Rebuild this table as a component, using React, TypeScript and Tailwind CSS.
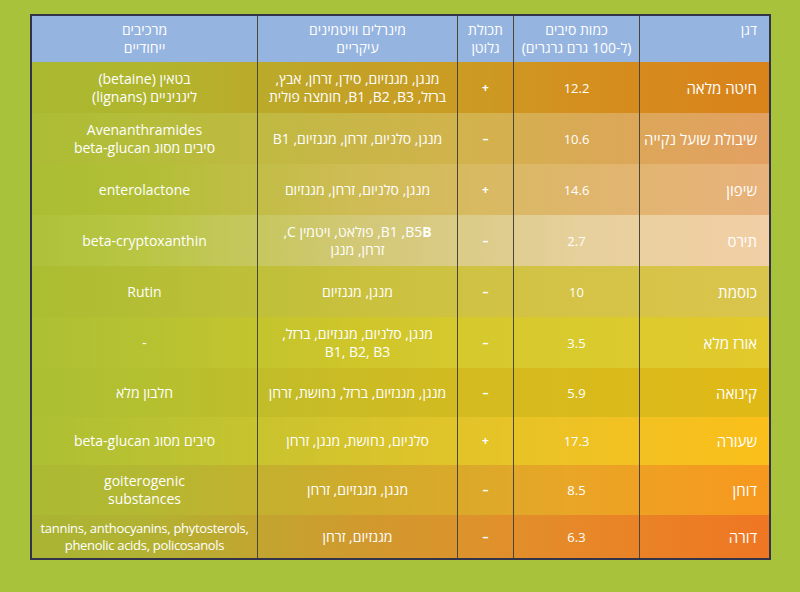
import React from "react";

type Row = {
  name: string;
  fiber: string;
  gluten: string;
  minerals: React.ReactNode;
  unique: React.ReactNode;
  h: string;
  bg: string;
};

const rows: Row[] = [
  {
    name: "חיטה מלאה",
    fiber: "12.2",
    gluten: "+",
    minerals: (
      <>
        מנגן, מגנזיום, סידן, זרחן, אבץ,
        <br />
        ברזל, <bdi>B3</bdi>, <bdi>B2</bdi>, <bdi>B1</bdi>, חומצה פולית
      </>
    ),
    unique: (
      <>
        בטאין (betaine)
        <br />
        ליגניניים (lignans)
      </>
    ),
    h: "h-[51px]",
    bg: "bg-[linear-gradient(to_left,#d9821b_0%,#d4901e_26%,#cc9a22_39%,#c4a126_56%,#b0b62e_85%,#a9b930_100%)]",
  },
  {
    name: "שיבולת שועל נקייה",
    fiber: "10.6",
    gluten: "–",
    minerals: <>מנגן, סלניום, זרחן, מגנזיום, B1</>,
    unique: (
      <>
        Avenanthramides
        <br />
        סיבים מסוג beta-glucan
      </>
    ),
    h: "h-[51px]",
    bg: "bg-[linear-gradient(to_left,#e3a062_0%,#d9aa55_26%,#d3b24d_39%,#c9b648_56%,#b5bd3a_85%,#acbc34_100%)]",
  },
  {
    name: "שיפון",
    fiber: "14.6",
    gluten: "+",
    minerals: <>מנגן, סלניום, זרחן, מגנזיום</>,
    unique: <>enterolactone</>,
    h: "h-[51px]",
    bg: "bg-[linear-gradient(to_left,#e8b27c_0%,#dfb66c_26%,#d8ba62_39%,#cfbc55_56%,#b2bf36_85%,#abbe33_100%)]",
  },
  {
    name: "תירס",
    fiber: "2.7",
    gluten: "–",
    minerals: (
      <>
        <bdi>
          B5<span className="font-bold">B</span>
        </bdi>
        , <bdi>B1</bdi>, פולאט, ויטמין C,
        <br />
        זרחן, מנגן
      </>
    ),
    unique: <>beta-cryptoxanthin</>,
    h: "h-[51px]",
    bg: "bg-[linear-gradient(to_left,#f2cfa6_0%,#e6d09c_26%,#dccc8a_39%,#d2c876_56%,#b9c644_85%,#aec13a_100%)]",
  },
  {
    name: "כוסמת",
    fiber: "10",
    gluten: "–",
    minerals: <>מנגן, מגנזיום</>,
    unique: <>Rutin</>,
    h: "h-[51px]",
    bg: "bg-[linear-gradient(to_left,#dac54c_0%,#d4c346_26%,#d0c244_39%,#c9c13e_56%,#b4be34_85%,#abbd32_100%)]",
  },
  {
    name: "אורז מלא",
    fiber: "3.5",
    gluten: "–",
    minerals: (
      <>
        מנגן, סלניום, מגנזיום, ברזל,
        <br />
        B1, B2, B3
      </>
    ),
    unique: <>-</>,
    h: "h-[51px]",
    bg: "bg-[linear-gradient(to_left,#e3c92c_0%,#d9ca2e_26%,#d6c92e_39%,#cfc62a_56%,#b6c232_85%,#adbf33_100%)]",
  },
  {
    name: "קינואה",
    fiber: "5.9",
    gluten: "–",
    minerals: <>מנגן, מגנזיום, ברזל, נחושת, זרחן</>,
    unique: <>חלבון מלא</>,
    h: "h-[49px]",
    bg: "bg-[linear-gradient(to_left,#e0b916_0%,#d8ba1c_26%,#d4bb20_39%,#cbbb24_56%,#b4c030_85%,#abbe33_100%)]",
  },
  {
    name: "שעורה",
    fiber: "17.3",
    gluten: "+",
    minerals: <>סלניום, נחושת, מנגן, זרחן</>,
    unique: <>סיבים מסוג beta-glucan</>,
    h: "h-[48px]",
    bg: "bg-[linear-gradient(to_left,#fbbf1a_0%,#eec224_26%,#e4c428_39%,#d6c42c_56%,#b8c232_85%,#adbf33_100%)]",
  },
  {
    name: "דוחן",
    fiber: "8.5",
    gluten: "–",
    minerals: <>מנגן, מגנזיום, זרחן</>,
    unique: (
      <>
        goiterogenic
        <br />
        substances
      </>
    ),
    h: "h-[50px]",
    bg: "bg-[linear-gradient(to_left,#f7981e_0%,#eaa526_26%,#dda92a_39%,#d0ab2c_56%,#b4b832_85%,#abba33_100%)]",
  },
  {
    name: "דורה",
    fiber: "6.3",
    gluten: "–",
    minerals: <>מגנזיום, זרחן</>,
    unique: (
      <span dir="ltr" className="block text-[13px] leading-[17px] tracking-[-0.3px]">
        tannins, anthocyanins, phytosterols,
        <br />
        phenolic acids, policosanols
      </span>
    ),
    h: "h-[43px]",
    bg: "bg-[linear-gradient(to_left,#ef7623_0%,#e78828_26%,#de922c_39%,#d09a2e_56%,#b2b232_85%,#aab433_100%)]",
  },
];

const divider = "border-l border-[#4a4638]";

export default function App() {
  return (
    <div
      className="w-[800px] h-[592px] bg-[#a8c23b] pt-[14px] pl-[30px]"
      style={{ fontFamily: '"Open Sans", "Liberation Sans", "DejaVu Sans", sans-serif' }}
    >
      <div dir="rtl" className="w-[741px] border-2 border-[#33334a] text-white">
        {/* header */}
        <div className="grid grid-cols-[130px_126px_56px_200px_1fr] h-[46px] bg-[#95b4df] text-[14px] leading-[18px]">
          <div className={`${divider} flex items-start pt-[5px] pr-[12px]`}>דגן</div>
          <div className={`${divider} flex items-start justify-center text-center pt-[5px]`}>
            <div>
              כמות סיבים
              <br />
              (ל-100 גרם גרגרים)
            </div>
          </div>
          <div className={`${divider} flex items-start justify-center text-center pt-[5px]`}>
            <div>
              תכולת
              <br />
              גלוטן
            </div>
          </div>
          <div className={`${divider} flex items-start justify-center text-center pt-[5px]`}>
            <div>
              מינרלים וויטמינים
              <br />
              עיקריים
            </div>
          </div>
          <div className="flex items-start justify-center text-center pt-[5px]">
            <div>
              מרכיבים
              <br />
              ייחודיים
            </div>
          </div>
        </div>
        {rows.map((r) => (
          <div
            key={r.name}
            className={`grid grid-cols-[130px_126px_56px_200px_1fr] ${r.h} ${r.bg} text-[14px] leading-[18px]`}
          >
            <div className={`${divider} flex items-center pr-[12px] text-[15px]`}>{r.name}</div>
            <div className={`${divider} flex items-center justify-center text-[13px] font-medium`}>
              {r.fiber}
            </div>
            <div className={`${divider} flex items-center justify-center text-[12px] font-bold`}>
              {r.gluten}
            </div>
            <div className={`${divider} flex items-center justify-center text-center px-1`}>
              <div>{r.minerals}</div>
            </div>
            <div className="flex items-center justify-center text-center px-1">
              <div>{r.unique}</div>
            </div>
          </div>
        ))}
      </div>
    </div>
  );
}
